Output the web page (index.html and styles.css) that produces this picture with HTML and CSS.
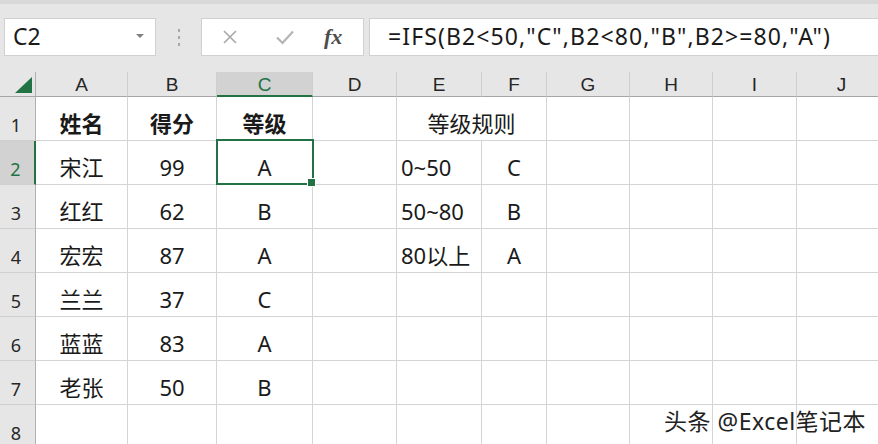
FILE: index.html
```html
<!DOCTYPE html>
<html lang="zh-CN">
<head>
  <meta charset="UTF-8">
  <title>IFS 等级</title>
  <link rel="stylesheet" href="styles.css">
</head>
<body>

<div class="toolbar">
  <div class="namebox">
    <span>C2</span>
    <span class="drop"></span>
  </div>
  <div class="grip"><i></i><i></i><i></i></div>
  <div class="btnbox">
    <svg class="ico" width="16" height="16" viewBox="0 0 16 16"><path d="M2 2L14 14M14 2L2 14" stroke="#a8a8a8" stroke-width="1.6" fill="none"/></svg>
    <svg class="ico" width="20" height="16" viewBox="0 0 20 16"><path d="M2 8.5L7.5 14L18 2.5" stroke="#b4b4b4" stroke-width="2.2" fill="none"/></svg>
    <span class="fx">fx</span>
  </div>
  <div class="formula">=IFS(B2&lt;50,"C",B2&lt;80,"B",B2&gt;=80,"A")</div>
</div>

<div class="sheet">
  <!-- column headers -->
  <div class="ch corner"><span class="tri"></span></div>
  <div class="ch">A</div>
  <div class="ch">B</div>
  <div class="ch on">C</div>
  <div class="ch">D</div>
  <div class="ch">E</div>
  <div class="ch">F</div>
  <div class="ch">G</div>
  <div class="ch">H</div>
  <div class="ch">I</div>
  <div class="ch">J</div>

  <div class="rh">1</div>
  <div class="c mid b">姓名</div>
  <div class="c mid b">得分</div>
  <div class="c mid b">等级</div>
  <div class="c"></div>
  <div class="c mid span2">等级规则</div>
  <div class="c"></div>
  <div class="c"></div>
  <div class="c"></div>
  <div class="c"></div>

  <div class="rh on">2</div>
  <div class="c mid">宋江</div>
  <div class="c mid">99</div>
  <div class="c mid sel">A</div>
  <div class="c"></div>
  <div class="c">0~50</div>
  <div class="c mid">C</div>
  <div class="c"></div>
  <div class="c"></div>
  <div class="c"></div>
  <div class="c"></div>

  <div class="rh">3</div>
  <div class="c mid">红红</div>
  <div class="c mid">62</div>
  <div class="c mid">B</div>
  <div class="c"></div>
  <div class="c">50~80</div>
  <div class="c mid">B</div>
  <div class="c"></div>
  <div class="c"></div>
  <div class="c"></div>
  <div class="c"></div>

  <div class="rh">4</div>
  <div class="c mid">宏宏</div>
  <div class="c mid">87</div>
  <div class="c mid">A</div>
  <div class="c"></div>
  <div class="c">80以上</div>
  <div class="c mid">A</div>
  <div class="c"></div>
  <div class="c"></div>
  <div class="c"></div>
  <div class="c"></div>

  <div class="rh">5</div>
  <div class="c mid">兰兰</div>
  <div class="c mid">37</div>
  <div class="c mid">C</div>
  <div class="c"></div>
  <div class="c"></div>
  <div class="c"></div>
  <div class="c"></div>
  <div class="c"></div>
  <div class="c"></div>
  <div class="c"></div>

  <div class="rh">6</div>
  <div class="c mid">蓝蓝</div>
  <div class="c mid">83</div>
  <div class="c mid">A</div>
  <div class="c"></div>
  <div class="c"></div>
  <div class="c"></div>
  <div class="c"></div>
  <div class="c"></div>
  <div class="c"></div>
  <div class="c"></div>

  <div class="rh">7</div>
  <div class="c mid">老张</div>
  <div class="c mid">50</div>
  <div class="c mid">B</div>
  <div class="c"></div>
  <div class="c"></div>
  <div class="c"></div>
  <div class="c"></div>
  <div class="c"></div>
  <div class="c"></div>
  <div class="c"></div>

  <div class="rh">8</div>
  <div class="c"></div>
  <div class="c"></div>
  <div class="c"></div>
  <div class="c"></div>
  <div class="c"></div>
  <div class="c"></div>
  <div class="c"></div>
  <div class="c"></div>
  <div class="c"></div>
  <div class="c"></div>
</div>

<div class="mark">头条 @Excel笔记本</div>

</body>
</html>
```

FILE: styles.css
```css
* {
  box-sizing: border-box;
}
html, body {
  margin: 0;
  height: 444px;
  overflow: hidden;
}
body {
  background: #fff;
  color: #1a1a1a;
  font-family: "Noto Sans", "Noto Sans CJK SC", sans-serif;
  position: relative;
}

/* formula bar */
.toolbar {
  height: 72px;
  background: #e6e6e6;
  border-top: 4px solid #d8d8d8;
  padding: 14px 0 0 4px;
  display: flex;
  align-items: flex-start;
}
.namebox, .btnbox, .formula {
  height: 38px;
  background: #fff;
  border: 1px solid #d0d0d0;
  display: flex;
  align-items: center;
}
.namebox {
  width: 152px;
  padding: 0 0 2px 8px;
  font-size: 23px;
  justify-content: space-between;
}
.drop {
  width: 0;
  height: 0;
  border-left: 4px solid transparent;
  border-right: 4px solid transparent;
  border-top: 4px solid #808080;
  margin-right: 11px;
}
.grip {
  width: 45px;
  height: 38px;
  display: flex;
  flex-direction: column;
  align-items: center;
  justify-content: center;
  gap: 4px;
}
.grip i {
  width: 2px;
  height: 3px;
  background: #a8a8a8;
}
.btnbox {
  width: 163px;
  padding-left: 20px;
}
.btnbox .ico {
  margin-right: 37px;
}
.fx {
  font-family: "Liberation Serif", serif;
  font-style: italic;
  font-weight: bold;
  font-size: 22px;
  color: #4d4d4d;
  margin-left: -8px;
}
.formula {
  flex: 1;
  margin-left: 5px;
  border-right: none;
  padding: 0 0 2px 18px;
  font-size: 23px;
  letter-spacing: 1.1px;
  color: #1a1a1a;
  white-space: nowrap;
}

/* grid */
.sheet {
  display: grid;
  grid-template-columns: 36px 92px 89px 96px 84px 85px 65px 83px 83px 84px 90px;
  grid-template-rows: 25px repeat(8, 44px);
}
.ch {
  background: #e6e6e6;
  border-right: 1px solid #cfcfcf;
  border-bottom: 1px solid #a6a6a6;
  font-family: "Liberation Sans", sans-serif;
  font-size: 19px;
  color: #262626;
  text-align: center;
  line-height: 20px;
  padding-top: 3px;
}
.ch.on {
  background: #d2d2d2;
  color: #217346;
  border-bottom: 2px solid #217346;
}
.corner {
  border-right: 1px solid #b0b0b0;
  position: relative;
}
.tri {
  position: absolute;
  right: 3px;
  bottom: 3px;
  width: 0;
  height: 0;
  border-left: 17px solid transparent;
  border-bottom: 16px solid #217346;
}
.rh {
  background: #e6e6e6;
  border-right: 1px solid #b0b0b0;
  border-bottom: 1px solid #cfcfcf;
  font-size: 18px;
  color: #262626;
  text-align: center;
  padding: 13px 3px 0 0;
  line-height: 30px;
}
.rh.on {
  background: #d2d2d2;
  color: #217346;
  border-right: 2px solid #217346;
}
.c {
  border-right: 1px solid #d4d4d4;
  border-bottom: 1px solid #d4d4d4;
  font-size: 22px;
  line-height: 30px;
  padding: 11px 0 0 4px;
  white-space: nowrap;
}
.mid {
  text-align: center;
  padding-left: 0;
}
.b {
  font-weight: bold;
}
.span2 {
  grid-column: span 2;
}
.sel {
  position: relative;
}
.sel::after {
  content: "";
  position: absolute;
  left: -1px;
  top: -2px;
  right: -2px;
  bottom: -1px;
  border: 2px solid #217346;
}
.sel::before {
  content: "";
  position: absolute;
  right: -4px;
  bottom: -3px;
  width: 7px;
  height: 7px;
  background: #217346;
  border: 1px solid #fff;
  z-index: 1;
}

.mark {
  position: absolute;
  left: 664px;
  top: 403px;
  font-size: 23px;
  letter-spacing: 0.5px;
  color: #222;
  text-shadow: 1px 1px 0 #fff, -1px 0 0 #fff;
}
```
